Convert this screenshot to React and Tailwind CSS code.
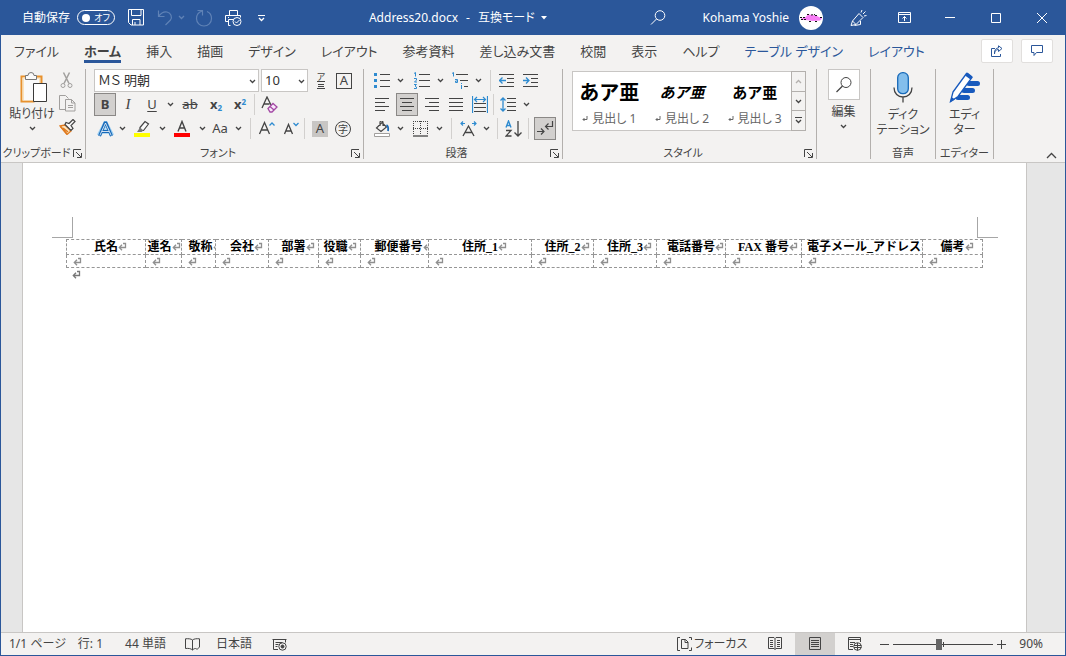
import React from "react";

const tabs = ["ファイル", "ホーム", "挿入", "描画", "デザイン", "レイアウト", "参考資料", "差し込み文書", "校閲", "表示", "ヘルプ"];
const tableTabs = ["テーブル デザイン", "レイアウト"];

const columns = [
    { label: "氏名", width: 79 },
    { label: "連名", width: 36, indent: "pr-2" },
    { label: "敬称", width: 34, indent: "pl-1" },
    { label: "会社", width: 53 },
    { label: "部署", width: 50 },
    { label: "役職", width: 42, indent: "pr-2" },
    { label: "郵便番号", width: 68, indent: "pl-2" },
    { label: "住所_1", width: 103 },
    { label: "住所_2", width: 62 },
    { label: "住所_3", width: 63 },
    { label: "電話番号", width: 69 },
    { label: "FAX 番号", width: 76 },
    { label: "電子メール_アドレス", width: 121, indent: "pl-1" },
    { label: "備考", width: 60 },
];

const headings = [
    { label: "見出し 1", sample: "text-xl" },
    { label: "見出し 2", sample: "text-[15px] italic" },
    { label: "見出し 3", sample: "text-[15px]" },
];

const Svg = ({ w = 16, h = 16, children, className = "" }) => (
    <svg width={w} height={h} viewBox={`0 0 ${w} ${h}`} fill="none" stroke="currentColor" className={`shrink-0 ${className}`} aria-hidden="true">
        {children}
    </svg>
);

const Chevron = ({ className = "" }) => (
    <Svg w={7} h={5} className={className}>
        <path d="M1 1l2.500 2.500L6 1" strokeWidth="1.300" />
    </Svg>
);

const Tool = ({ label, active, className = "w-6", children }) => (
    <button
        type="button"
        aria-label={label}
        aria-pressed={active}
        className={`flex h-[23px] shrink-0 items-center justify-center ${active ? "border border-[#8a8886] bg-[#d2d0ce]" : "hover:bg-[#e1dfdd]"} ${className}`}
    >
        {children}
    </button>
);

const Drop = ({ label }) => (
    <Tool label={`${label} オプション`} className="w-3">
        <Chevron />
    </Tool>
);

const Split = ({ className = "" }) => <span className={`h-[21px] w-px shrink-0 bg-[#d2d0ce] ${className}`} />;

const Group = ({ title, launcher, className, children }) => (
    <section className={`flex shrink-0 flex-col border-r border-[#b3b0ad] ${className}`}>
        <div className="h-[78px]">{children}</div>
        <div className="flex h-3 items-center">
            <h2 className="flex-1 text-center text-[11px] leading-3 whitespace-nowrap">{title}</h2>
            {launcher && (
                <button type="button" aria-label={`${title} の設定`} className="mr-[2px] p-px">
                    <Svg w={9} h={9}>
                        <path d="M8 .5H.5V8M3 3l5 5M8.500 4v4.500H4" />
                    </Svg>
                </button>
            )}
        </div>
    </section>
);

// Paragraph mark shown at the end of every cell
const ReturnMark = ({ className = "block text-[#8f8f8f]" }) => (
    <Svg w={9} h={9} className={className}>
        <path d="M5 1.500h2.500V5.500H1.500M4 2.800L1.300 5.500L4 8.200" strokeWidth="1.300" />
    </Svg>
);

const Lines = ({ rows, color }) => <>{rows.map(([x1, x2, y]) => <path key={y} d={`M${x1} ${y}.5H${x2}`} stroke={color} />)}</>;

const TitleBar = () => (
    <header className="flex h-[35px] shrink-0 items-center bg-[#2b579a] text-xs text-white">
        <div className="flex items-center pl-[21px]">
            <label className="flex items-center gap-[7px] whitespace-nowrap">
                自動保存
                <input type="checkbox" role="switch" className="sr-only" />
                <span className="flex h-[15px] w-[38px] items-center justify-between rounded-full border border-white px-[4px] text-[9px] leading-none">
                    <span className="size-2 rounded-full bg-white" />
                    オフ
                </span>
            </label>
            <button type="button" aria-label="上書き保存" className="ml-[13px]">
                <Svg w={17} h={17}>
                    <path d="M.5 .5h15v15.500H3L.5 13.500zM3.500 .5v6h9.500v-6M4.500 16v-5.500h7.500V16M7 16v-3" />
                </Svg>
            </button>
            <button type="button" aria-label="元に戻す" className="ml-3 text-[#5f82b6]">
                <Svg w={16} h={17}>
                    <path d="M1.500 1.500v6h6M1.500 7.500C4 4 7 2.500 10 3c4 .8 5.500 5 3.500 8L8.500 16" strokeWidth="1.200" />
                </Svg>
            </button>
            <button type="button" aria-label="元に戻す履歴" className="ml-[5px] text-[#5f82b6]">
                <Chevron />
            </button>
            <button type="button" aria-label="やり直し" className="ml-[10px] text-[#5f82b6]">
                <Svg w={18} h={18}>
                    <path d="M2.500 1.500h5v5M7 2C3 3.500 1.500 6 1.500 9.500a7.500 7.500 0 0 0 15 0C16.500 6 14.500 3.500 12 2.500" strokeWidth="1.200" />
                </Svg>
            </button>
            <button type="button" aria-label="印刷プレビューと印刷" className="ml-3">
                <Svg w={18} h={18}>
                    <path d="M4.500 6V1.500h8V6M3.500 12.500H.5v-6h15v2M5.500 16.500h-2v-6h5M3 8.500h1" />
                    <circle cx="12" cy="12.500" r="4" />
                    <path d="M10 12.500l1.500 1.500 3-3" />
                </Svg>
            </button>
            <button type="button" aria-label="クイック アクセス ツール バーのユーザー設定" className="ml-[15px]">
                <Svg w={8} h={8}>
                    <path d="M0 1.500h7" />
                    <path d="M1 4l2.500 2.500L6 4" strokeWidth="1.300" />
                </Svg>
            </button>
        </div>
        <div className="flex flex-1 items-center justify-center gap-2 whitespace-nowrap">
            <h1>Address20.docx</h1>
            <span>-</span>
            <button type="button" className="flex items-center gap-[6px]">
                互換モード
                <Svg w={6} h={4}>
                    <path d="M0 0h6L3 3.500z" fill="currentColor" stroke="none" />
                </Svg>
            </button>
        </div>
        <div className="flex items-center whitespace-nowrap">
            <button type="button" aria-label="検索">
                <Svg w={16} h={16}>
                    <circle cx="10" cy="5.500" r="4.800" />
                    <path d="M6.500 9L1 14.500" />
                </Svg>
            </button>
            <button type="button" className="ml-[37px] flex items-center gap-[10px]">
                Kohama Yoshie
                <Svg w={24} h={24}>
                    <circle cx="12" cy="12" r="12" fill="#fff" stroke="none" />
                    <path d="M2 12.500l4-1 3-3 5 .5 4 1 5 2.500-2 2-7 .5-5-.8-7-.5z" fill="#f77df5" stroke="none" />
                    <path d="M1 11.500h6M2 13.500h6M8 8.500h3M12 9l4-.5M16 9.500h3M10 15.500h3M16 15.500h2M21 11.500h2" stroke="#111" strokeDasharray="2 1" />
                </Svg>
            </button>
            <button type="button" aria-label="新機能" className="ml-3 flex w-[46px] justify-center">
                <Svg w={18} h={18}>
                    <path d="M2 16.500L3.500 12 10 4.500l4 4L7 15.500 2 16.500zM3.500 12L7 15.500M5.500 16.500L11.500 15.500V12M12 3.500L13 1M14 5l2.500-2.500M15 7l2.500-.5" />
                </Svg>
            </button>
            <button type="button" aria-label="リボンの表示オプション" className="flex w-[46px] justify-center">
                <Svg w={13} h={11}>
                    <path d="M.5 .5h12v10H.5zM.5 2.500h12M6.500 9V4.500M4.500 6.500l2-2 2 2" />
                </Svg>
            </button>
            <button type="button" aria-label="最小化" className="flex w-[46px] justify-center">
                <Svg w={10} h={11}>
                    <path d="M0 5.500h10" />
                </Svg>
            </button>
            <button type="button" aria-label="最大化" className="flex w-[46px] justify-center">
                <Svg w={10} h={10}>
                    <path d="M.5 .5h9v9h-9z" />
                </Svg>
            </button>
            <button type="button" aria-label="閉じる" className="flex w-[46px] justify-center">
                <Svg w={10} h={10}>
                    <path d="M0 0l10 10M10 0L0 10" />
                </Svg>
            </button>
        </div>
    </header>
);

const TabBar = () => (
    <nav className="flex h-[31px] shrink-0 items-center pr-3 pl-[13px] text-[13px] leading-4 whitespace-nowrap">
        <div className="flex flex-1 items-center gap-[25px]">
            {tabs.map((tab) => (
                <button key={tab} type="button" className={`h-[25px] border-b-3 pt-1 ${tab === "ホーム" ? "border-[#2b579a] font-bold" : "border-transparent"}`}>
                    {tab}
                </button>
            ))}
            {tableTabs.map((tab) => (
                <button key={tab} type="button" className="h-[25px] border-b-3 border-transparent pt-1 text-[#2b579a]">
                    {tab}
                </button>
            ))}
        </div>
        <div className="flex gap-2 text-[#2b579a]">
            <button type="button" aria-label="共有" className="flex h-6 w-8 items-center justify-center rounded-xs border border-[#e1dfdd] bg-white">
                <Svg w={12} h={12}>
                    <path d="M4 3.500H.5v8h9V9M3.500 9c0-3 1.500-4.500 4-4.500V6.500L11 3.500 7.500 .8v2C5 3 3 5 3.500 9z" />
                </Svg>
            </button>
            <button type="button" aria-label="コメント" className="flex h-6 w-8 items-center justify-center rounded-xs border border-[#e1dfdd] bg-white">
                <Svg w={12} h={12}>
                    <path d="M.5 .5h11v7H5.500L3 10.500V7.500H.5z" />
                </Svg>
            </button>
        </div>
    </nav>
);

const Clipboard = () => (
    <Group title="クリップボード" launcher className="w-[85px]">
        <div className="flex">
            <button type="button" className="flex w-[54px] flex-col items-center pt-[3px] pl-[8px] text-xs leading-4 whitespace-nowrap">
                <Svg w={28} h={31} className="mb-[3px] ml-1">
                    <path d="M6 4.500H1.500v25h13" stroke="#e8912d" strokeWidth="2" />
                    <path d="M2.500 5.500h18v6h-6v17h-12z" fill="#fbe3bd" stroke="none" />
                    <path d="M4 7h15v5h-5v16H4z" fill="#fafafa" stroke="none" />
                    <path d="M17 4.500h4.500V11" stroke="#e8912d" strokeWidth="2" />
                    <path d="M5.500 7.500v-4H8a3 3 0 0 1 6 0h2.500v4z" fill="#fafafa" stroke="#777" />
                    <path d="M13.500 11.500h13v18h-13z" fill="#fff" stroke="#3b3a39" />
                </Svg>
                貼り付け
                <Chevron className="mt-1" />
            </button>
            <div className="flex flex-col">
                <Tool label="切り取り">
                    <Svg w={14} h={17} className="text-[#a19f9d]">
                        <path d="M3.500 .5l5.500 11M9.500 .5L4 11.500" strokeWidth="1.500" />
                        <circle cx="3" cy="13.500" r="2" />
                        <circle cx="10" cy="13.500" r="2" />
                    </Svg>
                </Tool>
                <Tool label="コピー">
                    <Svg w={17} h={17} className="text-[#a19f9d]">
                        <path d="M6 14.500H.5V.5h6l3 3M6.500 4.500h6l3.500 3.500v8H6.500zM12.500 4.500V8H16M9 10.500h5M9 12.500h5" />
                    </Svg>
                </Tool>
                <Tool label="書式のコピー/貼り付け">
                    <Svg w={17} h={16}>
                        <path d="M1 7l5-1 6 6-4 3.500z" fill="#fbe3bd" stroke="#e07b1f" strokeWidth="1.300" />
                        <path d="M1.500 7.500l6.500 7.500M4 9l5 4" stroke="#e07b1f" strokeWidth="1.500" />
                        <path d="M6 5.500l6 6 2-2-2-3 4-4-2-2-4 4-3-1z" fill="#fafafa" stroke="#444" strokeWidth="1.200" />
                    </Svg>
                </Tool>
            </div>
        </div>
    </Group>
);

const FontGroup = () => (
    <Group title="フォント" launcher className="w-[278px]">
        <div className="flex flex-col gap-px pl-2">
            <div className="flex h-[23px] items-center gap-[2px]">
                <div className="relative flex">
                    <select aria-label="フォント名" className="h-[23px] w-[165px] appearance-none border border-[#c8c6c4] bg-white pl-[3px] text-[13px] text-[#333]">
                        <option>ＭＳ 明朝</option>
                    </select>
                    <Chevron className="pointer-events-none absolute top-[10px] right-[3px]" />
                </div>
                <div className="relative flex">
                    <select aria-label="フォント サイズ" className="h-[23px] w-[47px] appearance-none border border-[#c8c6c4] bg-white pl-[3px] text-[13px] text-[#333]">
                        <option>10</option>
                    </select>
                    <Chevron className="pointer-events-none absolute top-[10px] right-[3px]" />
                </div>
                <div className="flex">
                    <Tool label="ルビ" className="w-[22px]">
                        <span className="flex flex-col items-center text-[9px] leading-[9px]">
                            ア
                            <Svg w={8} h={8}>
                                <path d="M0 .5h8M1 3.500h6M1 5.500h6M0 7.500h8" />
                            </Svg>
                        </span>
                    </Tool>
                    <Tool label="囲み線">
                        <span className="flex size-4 items-center justify-center border border-[#444] text-[13px] leading-none">A</span>
                    </Tool>
                </div>
            </div>
            <div className="flex items-center">
                <Tool label="太字" active className="w-[22px] text-[13px] font-bold">B</Tool>
                <Tool label="斜体" className="w-6 font-['Liberation_Serif',serif] text-[15px] italic">I</Tool>
                <Tool label="下線" className="w-6 text-[13px] underline underline-offset-2">U</Tool>
                <Drop label="下線" />
                <Tool label="取り消し線" className="w-7 text-[13px] line-through">ab</Tool>
                <Tool label="下付き" className="w-6 text-[13px] font-bold">
                    <span>
                        x<sub className="text-[8px] text-[#2e8bd0]">2</sub>
                    </span>
                </Tool>
                <Tool label="上付き" className="w-6 text-[13px] font-bold">
                    <span>
                        x<sup className="text-[8px] text-[#2e8bd0]">2</sup>
                    </span>
                </Tool>
                <Split className="mx-[2px]" />
                <Tool label="すべての書式をクリア">
                    <Svg w={17} h={17}>
                        <path d="M1 12L6 1l4 8M3 8h5.500" strokeWidth="1.300" />
                        <path d="M7 12.500l5-5 4 3.500-5 5-2 0z" fill="#f8e6fa" stroke="#a349a4" strokeWidth="1.300" />
                        <path d="M9 10.500l4 3.500" stroke="#a349a4" strokeWidth="1.300" />
                    </Svg>
                </Tool>
            </div>
            <div className="flex items-center">
                <Tool label="文字の効果" className="w-[22px]">
                    <Svg w={17} h={16}>
                        <path d="M2 14.500L8.500 2 15 14.500M4.500 10.500h8" stroke="#9fd0f2" strokeWidth="4.500" />
                        <path d="M2.500 15L8 2h1l5.500 13M5 10.500h7" stroke="#1769b8" strokeWidth="3" />
                        <path d="M2.800 14.500L8.500 2 14.200 14.500M5 10.500h7" stroke="#fff" strokeWidth=".8" />
                    </Svg>
                </Tool>
                <Drop label="文字の効果" />
                <Tool label="蛍光ペンの色" className="w-7">
                    <Svg w={16} h={17}>
                        <path d="M0 15h16" stroke="#ffff00" strokeWidth="4" />
                        <path d="M6 7.500l5-6 3.500 2.500-5 6.500H6z" strokeWidth="1.200" fill="#fafafa" />
                        <path d="M6 7.500L3 12h4.500l2-1.500z" fill="#777" stroke="none" />
                    </Svg>
                </Tool>
                <Drop label="蛍光ペンの色" />
                <Tool label="フォントの色" className="w-7">
                    <Svg w={16} h={17}>
                        <path d="M0 15h16" stroke="#ff0000" strokeWidth="4" />
                        <path d="M4 11.500L8 1.500l4 10M5.500 8h5" strokeWidth="1.400" />
                    </Svg>
                </Tool>
                <Drop label="フォントの色" />
                <Tool label="文字種の変換" className="w-6 text-[13px]">Aa</Tool>
                <Drop label="文字種の変換" />
                <Split className="mr-[3px] ml-[6px]" />
                <Tool label="フォント サイズの拡大">
                    <Svg w={17} h={16}>
                        <path d="M1.500 13L6.500 1.500 11.500 13M3.500 9h6.500" strokeWidth="1.300" />
                        <path d="M11.500 4.500L14 2l2.500 2.500" stroke="#2e8bd0" strokeWidth="1.300" />
                    </Svg>
                </Tool>
                <Tool label="フォント サイズの縮小">
                    <Svg w={17} h={16}>
                        <path d="M2.500 13L6.500 3.500 10.500 13M4 10h5" strokeWidth="1.300" />
                        <path d="M11.500 2L14 4.500 16.500 2" stroke="#2e8bd0" strokeWidth="1.300" />
                    </Svg>
                </Tool>
                <Split className="mr-1 ml-[2px]" />
                <Tool label="文字の網かけ" className="w-[22px]">
                    <span className="flex size-4 items-center justify-center bg-[#c8c6c4] text-[13px] leading-none">A</span>
                </Tool>
                <Tool label="囲い文字">
                    <span className="flex size-4 items-center justify-center rounded-full border border-[#444] text-[10px] leading-none">字</span>
                </Tool>
            </div>
        </div>
    </Group>
);

const Paragraph = () => (
    <Group title="段落" launcher className="w-[199px]">
        <div className="flex flex-col gap-px pl-[6px]">
            <div className="flex items-center">
                <Tool label="箇条書き">
                    <Svg w={16} h={16}>
                        <path d="M0 1.500h3M0 7.500h3M0 13.500h3" stroke="#2e8bd0" strokeWidth="3" />
                        <Lines rows={[[6, 16, 1], [6, 16, 7], [6, 16, 13]]} />
                    </Svg>
                </Tool>
                <Drop label="箇条書き" />
                <Tool label="段落番号" className="ml-1 w-6">
                    <Svg w={16} h={17}>
                        <path d="M0 1.500L1.500 .5V4.500M0 6.500h2.500v1.500L.5 10h2.500M0 12.500h2.500L1 14l1.500 1v1.500H0" stroke="#2e8bd0" />
                        <Lines rows={[[5, 16, 2], [5, 16, 8], [5, 16, 14]]} />
                    </Svg>
                </Tool>
                <Drop label="段落番号" />
                <Tool label="アウトライン" className="ml-[2px] w-6">
                    <Svg w={16} h={17}>
                        <path d="M0 1.500L1.500 .5V4.500M3 7.500h2.500v3H3.500V9h2M9.500 13v4M9.500 11v1" stroke="#2e8bd0" />
                        <Lines rows={[[4, 16, 2], [8, 16, 8], [12, 16, 14]]} />
                    </Svg>
                </Tool>
                <Drop label="アウトライン" />
                <Split className="mr-[3px] ml-[6px]" />
                <Tool label="インデントを減らす">
                    <Svg w={15} h={14}>
                        <Lines rows={[[0, 15, 0], [8, 15, 4], [8, 15, 8], [0, 15, 12]]} />
                        <path d="M1 6.500h6M3.500 3.500l-3 3 3 3" stroke="#2e8bd0" strokeWidth="1.300" />
                    </Svg>
                </Tool>
                <Tool label="インデントを増やす">
                    <Svg w={15} h={14}>
                        <Lines rows={[[0, 15, 0], [8, 15, 4], [8, 15, 8], [0, 15, 12]]} />
                        <path d="M0 6.500h6M3 3.500l3 3-3 3" stroke="#2e8bd0" strokeWidth="1.300" />
                    </Svg>
                </Tool>
            </div>
            <div className="flex items-center">
                <Tool label="左揃え">
                    <Svg w={14} h={14}>
                        <Lines rows={[[0, 14, 0], [0, 10, 4], [0, 14, 8], [0, 10, 12]]} />
                    </Svg>
                </Tool>
                <Tool label="中央揃え" active className="mx-[2px] w-[22px]">
                    <Svg w={14} h={14}>
                        <Lines rows={[[0, 14, 0], [2, 12, 4], [0, 14, 8], [2, 12, 12]]} />
                    </Svg>
                </Tool>
                <Tool label="右揃え">
                    <Svg w={14} h={14}>
                        <Lines rows={[[0, 14, 0], [4, 14, 4], [0, 14, 8], [4, 14, 12]]} />
                    </Svg>
                </Tool>
                <Tool label="両端揃え">
                    <Svg w={14} h={14}>
                        <Lines rows={[[0, 14, 0], [0, 14, 4], [0, 14, 8], [0, 14, 12]]} />
                    </Svg>
                </Tool>
                <Tool label="均等割り付け">
                    <Svg w={16} h={17}>
                        <Lines rows={[[2, 14, 7], [2, 14, 11], [2, 14, 15]]} />
                        <path d="M.5 0v17M15.500 0v17M3 3.500h10M5 1L2.500 3.500 5 6M11 1l2.500 2.500L11 6" stroke="#2e8bd0" strokeWidth="1.200" />
                    </Svg>
                </Tool>
                <Split className="mr-[2px] ml-[1px]" />
                <Tool label="行と段落の間隔">
                    <Svg w={16} h={15}>
                        <Lines rows={[[7, 16, 1], [7, 16, 5], [7, 16, 9], [7, 16, 13]]} />
                        <path d="M3 1v13M.5 3.500L3 1l2.500 2.500M.5 11.500L3 14l2.500-2.500" stroke="#2e8bd0" strokeWidth="1.300" />
                    </Svg>
                </Tool>
                <Drop label="行と段落の間隔" />
            </div>
            <div className="flex items-center">
                <Tool label="塗りつぶし">
                    <Svg w={16} h={16}>
                        <path d="M.5 12.500h15v3H.5z" fill="#fff" stroke="#a19f9d" />
                        <path d="M2.500 7L8 1.500l4.500 4.500L7 10.500zM6 5V1.500a1.500 1.500 0 0 1 3 0V5" strokeWidth="1.200" />
                        <path d="M12.500 4c2 1 2 3 1.500 6" stroke="#1769b8" strokeWidth="1.800" />
                    </Svg>
                </Tool>
                <Drop label="塗りつぶし" />
                <Tool label="罫線" className="ml-[3px] w-6">
                    <Svg w={16} h={16}>
                        <path d="M0 .5h15M0 7.500h15M.5 0v14M7.500 0v14M14.500 0v14" strokeDasharray="1 1" shapeRendering="crispEdges" />
                        <path d="M0 15h15" strokeWidth="1" stroke="#111" />
                    </Svg>
                </Tool>
                <Drop label="罫線" />
                <Split className="mr-1 ml-[6px]" />
                <Tool label="拡張書式">
                    <Svg w={17} h={16}>
                        <path d="M3 15L8.500 5 14 15M5 11.500h7" strokeWidth="1.300" />
                        <path d="M1 2.500h4M3 .5l-2 2 2 2M12 2.500h4M14 .5l2 2-2 2" stroke="#2e8bd0" strokeWidth="1.200" />
                    </Svg>
                </Tool>
                <Drop label="拡張書式" />
                <Split className="mr-[3px] ml-[5px]" />
                <Tool label="並べ替え">
                    <Svg w={17} h={17}>
                        <path d="M1 7.500L3.500 1 6 7.500M2 5.500h3" stroke="#2e8bd0" strokeWidth="1.400" />
                        <path d="M1 10.500h5L1 16h5.500M13 1v15M9.500 12.500L13 16l3.500-3.500" strokeWidth="1.300" />
                    </Svg>
                </Tool>
                <Split className="mr-[5px] ml-[3px]" />
                <Tool label="編集記号の表示/非表示" active className="w-[22px]">
                    <Svg w={17} h={16}>
                        <path d="M15.500 0v5.500H8.500M11.500 2.500l-3 3 3 3M0 10.500h7M4 7.500l3 3-3 3" strokeWidth="1.200" />
                    </Svg>
                </Tool>
            </div>
        </div>
    </Group>
);

const Styles = () => (
    <Group title="スタイル" launcher className="w-[254px]">
        <div className="mr-[10px] ml-[9px] mt-[2px] flex h-[60px] border border-[#c8c6c4] bg-white">
            <div className="grid flex-1 grid-cols-3">
                {headings.map((heading) => (
                    <button key={heading.label} type="button" className="flex flex-col items-center justify-between pt-[5px] pb-[4px] whitespace-nowrap">
                        <span className={`font-['Noto_Sans_CJK_JP',serif] leading-[30px] font-bold text-black [font-feature-settings:normal] ${heading.sample}`}>あア亜</span>
                        <span className="flex items-center gap-1 text-xs leading-[15px] text-[#666]">
                            <Svg w={6} h={6}>
                                <path d="M5 0v3.500H1M2.500 2L1 3.500 2.500 5" />
                            </Svg>
                            {heading.label}
                        </span>
                    </button>
                ))}
            </div>
            <div className="-my-px -mr-px flex w-[15px] flex-col border border-[#b3b0ad] bg-[#f3f2f1]">
                <button type="button" aria-label="上へ" className="flex flex-1 items-center justify-center text-[#b3b0ad]">
                    <Chevron className="rotate-180" />
                </button>
                <button type="button" aria-label="下へ" className="flex flex-1 items-center justify-center border-y border-[#b3b0ad]">
                    <Chevron />
                </button>
                <button type="button" aria-label="その他のスタイル" className="flex flex-1 items-center justify-center">
                    <Svg w={7} h={7}>
                        <path d="M0 .5h7" />
                        <path d="M1 3l2.500 2.500L6 3" strokeWidth="1.300" />
                    </Svg>
                </button>
            </div>
        </div>
    </Group>
);

const Ribbon = () => (
    <div className="flex h-[97px] shrink-0 border-b border-[#c8c6c4] pt-[3px] pb-[3px]">
        <Clipboard />
        <FontGroup />
        <Paragraph />
        <Styles />
        <Group title="" className="w-[54px]">
            <button type="button" className="flex w-full flex-col items-center text-xs">
                <span className="flex h-[31px] w-8 items-center justify-center border border-[#c8c6c4] bg-white">
                    <Svg w={16} h={16}>
                        <circle cx="10" cy="5.500" r="5" />
                        <path d="M6.500 9L.5 15" strokeWidth="1.200" />
                    </Svg>
                </span>
                <span className="mt-1 leading-4">編集</span>
                <Chevron className="mt-1" />
            </button>
        </Group>
        <Group title="音声" className="w-[65px]">
            <button type="button" className="flex w-full flex-col items-center pt-[3px] text-xs leading-[15px] whitespace-nowrap">
                <Svg w={20} h={31} className="mb-1">
                    <rect x="4.700" y=".7" width="10.600" height="21" rx="5" fill="#83beec" stroke="#1769b8" strokeWidth="1.300" />
                    <path d="M1 15.500c0 6 4 9.500 9 9.500s9-3.500 9-9.500M10 25v5.500" strokeWidth="1.300" />
                </Svg>
                <span>ディク</span>
                <span>テーション</span>
            </button>
        </Group>
        <Group title="エディター" className="w-[58px]">
            <button type="button" className="flex w-full flex-col items-center pt-[3px] text-xs leading-[15px] whitespace-nowrap">
                <Svg w={32} h={31} className="mb-1">
                    <path d="M20 11.500h8.500M15 18.500h8.500M9 25.500h9.500" stroke="#185abd" strokeWidth="5" strokeLinecap="round" />
                    <path d="M4 20L17.500 1.500l5.500 4L9 24.500l-7.500 5z" fill="#fff" stroke="#185abd" strokeWidth="1.300" />
                    <path d="M16 3.500L18.500 .5l5 4-2 3z" fill="#185abd" stroke="none" />
                    <path d="M2.500 25L1 30.500l5-3z" fill="#185abd" stroke="none" />
                </Svg>
                <span>エディ</span>
                <span>ター</span>
            </button>
        </Group>
        <button type="button" aria-label="リボンを折りたたむ" className="ml-auto self-end pr-2">
            <Svg w={11} h={7}>
                <path d="M1 6l4.500-4.500L10 6" strokeWidth="1.300" />
            </Svg>
        </button>
    </div>
);

const Document = () => (
    <main className="flex min-h-0 flex-1 bg-[#e6e6e6] pr-[38px] pl-[21px]">
        <div className="flex-1 border-x border-[#c8c6c4] bg-white pt-[54px] font-['Liberation_Serif','Noto_Sans_CJK_JP',serif] text-xs text-black [font-feature-settings:normal]">
            <div className="mr-[28px] ml-[29px] flex justify-between">
                <span className="size-[21px] border-r border-b border-[#a6a6a6]" />
                <span className="size-[21px] border-b border-l border-[#a6a6a6]" />
            </div>
            <div className="mx-[43px] mt-px">
                <table className="w-full table-fixed border-collapse">
                    <colgroup>
                        {columns.map((column) => (
                            <col key={column.label} style={{ width: column.width }} />
                        ))}
                    </colgroup>
                    <thead>
                        <tr>
                            {columns.map((column) => (
                                <th key={column.label} scope="col" className={`h-[15px] overflow-hidden border border-dashed border-[#969696] text-center leading-[14px] font-bold whitespace-nowrap ${column.indent || "px-0"}`}>
                                    {column.label}
                                    <span className="inline-block w-0 pt-[2px] align-top">
                                        <ReturnMark />
                                    </span>
                                </th>
                            ))}
                        </tr>
                    </thead>
                    <tbody>
                        <tr>
                            {columns.map((column) => (
                                <td key={column.label} className="h-[13px] overflow-hidden border border-dashed border-[#969696] py-0 pr-0 pl-[6px] leading-[12px]">
                                    <ReturnMark />
                                </td>
                            ))}
                        </tr>
                    </tbody>
                </table>
                <p className="pt-[2px] pl-[6px]">
                    <ReturnMark className="block text-[#777]" />
                </p>
            </div>
        </div>
    </main>
);

const StatusBar = () => (
    <footer className="flex h-[23px] shrink-0 items-center border-t border-[#c8c6c4] text-xs whitespace-nowrap">
        <div className="flex flex-1 items-center pl-2">
            <span>1/1 ページ</span>
            <span className="ml-3">行: 1</span>
            <span className="ml-[22px]">44 単語</span>
            <button type="button" aria-label="文章校正" className="ml-[19px]">
                <Svg w={15} h={13}>
                    <path d="M7.500 2C6 .8 3.500 .5 .5 .8v9.700c3-.3 5.500 0 7 1.500 1-1 2-1.500 3-1.500M7.500 2C9 .8 11.500 .5 14.500 .8V9M7.500 2v10M10.500 10l1.500 1.500L14.500 9" />
                </Svg>
            </button>
            <span className="ml-4">日本語</span>
            <button type="button" aria-label="マクロの記録" className="ml-5">
                <Svg w={15} h={13}>
                    <path d="M6 11.500H1.500V1.500h12v3M.5 1.500h14M3.500 4.500h7M3.500 6.500h3M3.500 8.500h2" />
                    <circle cx="10.500" cy="8.500" r="3.700" />
                    <circle cx="10.500" cy="8.500" r="1.500" fill="currentColor" />
                </Svg>
            </button>
        </div>
        <button type="button" className="mr-2 flex items-center gap-[2px]">
            <Svg w={15} h={14}>
                <path d="M3 .5H.5V3M.5 3v10.500H3M12 .5h2.500V3M14.500 10.500v3H12M4.500 2.500h4l2.500 2.500v6.500H4.500zM8 2.500v3h3" />
            </Svg>
            フォーカス
        </button>
        <button type="button" aria-label="閲覧モード" className="flex h-full w-10 items-center justify-center pb-px">
            <Svg w={14} h={13}>
                <path d="M7 1.500v11M.5 .5H6l1 1 1-1h5.500v11H8l-1 1-1-1H.5zM2 3.500h3M2 5.500h3M2 7.500h3M2 9.500h3M9 3.500h3M9 5.500h3M9 7.500h3M9 9.500h3" />
            </Svg>
        </button>
        <button type="button" aria-label="印刷レイアウト" aria-pressed="true" className="flex h-full w-10 items-center justify-center bg-[#d2d0ce] pb-px">
            <Svg w={12} h={13}>
                <path d="M.5 .5h11v12H.5zM2 3.500h8M2 5.500h8M2 7.500h8M2 9.500h8" />
            </Svg>
        </button>
        <button type="button" aria-label="Web レイアウト" className="flex h-full w-10 items-center justify-center pb-px">
            <Svg w={14} h={14}>
                <path d="M5 12.500H.5V.5h12V5M.5 2.500h12M2 5.500h5M2 7.500h3M2 9.500h3" />
                <circle cx="9.500" cy="9.500" r="3.800" />
                <path d="M6 8.500h7.500M6 10.500h7.500M9.500 6v7.500" />
            </Svg>
        </button>
        <button type="button" aria-label="縮小" className="ml-[5px]">
            <Svg w={9} h={9}>
                <path d="M0 4.500h9" />
            </Svg>
        </button>
        <div className="relative mx-1 flex items-center">
            <input
                type="range"
                aria-label="ズーム"
                defaultValue={45}
                className="h-3 w-[100px] appearance-none bg-transparent [&::-webkit-slider-runnable-track]:h-px [&::-webkit-slider-runnable-track]:bg-[#444] [&::-webkit-slider-thumb]:-mt-[5px] [&::-webkit-slider-thumb]:h-[11px] [&::-webkit-slider-thumb]:w-[6px] [&::-webkit-slider-thumb]:appearance-none [&::-webkit-slider-thumb]:bg-[#666]"
            />
            <span className="pointer-events-none absolute left-1/2 h-[5px] w-px bg-[#444]" />
        </div>
        <button type="button" aria-label="拡大">
            <Svg w={9} h={9}>
                <path d="M0 4.500h9M4.500 0v9" />
            </Svg>
        </button>
        <span className="mr-[22px] ml-[13px]">90%</span>
    </footer>
);

export default function App() {
    return (
        <div className="flex h-screen min-w-[1040px] flex-col overflow-hidden border-x border-b border-[#2b579a] bg-[#f3f2f1] font-['Noto_Sans','Noto_Sans_CJK_JP',sans-serif] text-[#444] [font-feature-settings:'palt']">
            <TitleBar />
            <TabBar />
            <Ribbon />
            <Document />
            <StatusBar />
        </div>
    );
}
